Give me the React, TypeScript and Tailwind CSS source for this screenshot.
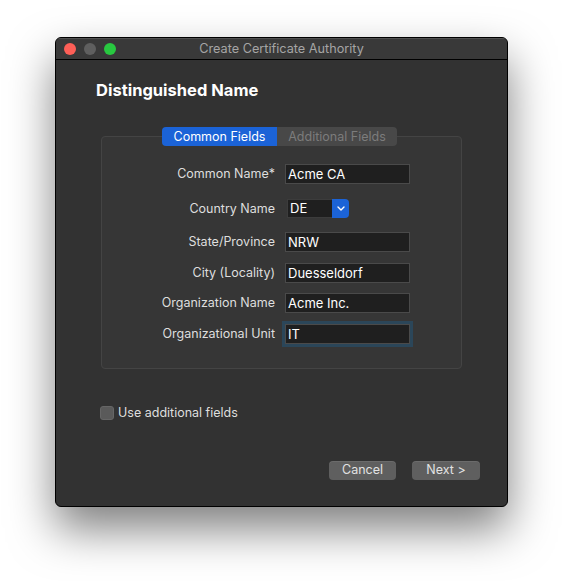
import React from "react";

const font = { fontFamily: "Inter, 'Liberation Sans', sans-serif" };

function Field({ label, value, focused, mt }: { label: string; value: string; focused?: boolean; mt: string }) {
  return (
    <div className={`flex items-center h-[20px] ${mt}`}>
      <div className="w-[174px] text-right text-[12.5px] text-[#dedede] pr-[1px] pt-[1px]">{label}</div>
      <div
        className={`ml-[9px] w-[125px] h-[20px] bg-[#1f1f1f] border border-[#4a4a4a] flex items-center pl-[2px] pt-[1px] text-[13px] text-white ${
          focused ? "shadow-[0_0_0_3px_#2b4659] border-[#3b6d8f]" : ""
        }`}
      >
        {value}
      </div>
    </div>
  );
}

export default function App() {
  return (
    <div className="w-[563px] h-[581px] bg-white pl-[55px] pt-[37px]" style={font}>
      <div className="w-[453px] h-[470px] rounded-[6px] border border-black bg-[#323232] shadow-[0_22px_45px_rgba(0,0,0,0.5)] flex flex-col overflow-hidden">
        {/* title bar */}
        <div className="relative h-[22px] shrink-0 bg-[#393939] border-b border-black flex items-center justify-center shadow-[inset_0_1px_0_rgba(255,255,255,0.12)]">
          <div className="absolute left-[8px] top-[5px] flex gap-[8px]">
            <span className="w-[12px] h-[12px] rounded-full bg-[#fe5f57]" />
            <span className="w-[12px] h-[12px] rounded-full bg-[#5f5f5f]" />
            <span className="w-[12px] h-[12px] rounded-full bg-[#28c840]" />
          </div>
          <span className="text-[12.7px] text-[#a5a5a5]">Create Certificate Authority</span>
        </div>

        <div className="ml-[40px] mt-[20px] text-[16.5px] leading-[20px] font-bold text-white">Distinguished Name</div>

        {/* tabs */}
        <div className="relative z-10 mt-[27px] ml-[106px] flex h-[19px] w-[235px] rounded-[4px] overflow-hidden text-[12.5px]">
          <div className="w-[115px] bg-[#1b63d7] text-white flex items-center justify-center pt-[1px]">Common Fields</div>
          <div className="flex-1 bg-[#484848] text-[#7c7c7c] flex items-center justify-center pt-[1px]">Additional Fields</div>
        </div>

        {/* box */}
        <div className="-mt-[10px] ml-[45px] w-[361px] h-[233px] rounded-[4px] border border-[#444444] bg-[#363636] pt-[27px]">
          <Field label="Common Name*" value="Acme CA" mt="" />
          <div className="flex items-center h-[19px] mt-[15px]">
            <div className="w-[174px] text-right text-[12.5px] text-[#dedede] pr-[1px] pt-[1px]">Country Name</div>
            <div className="ml-[11px] flex h-[19px]">
              <div className="w-[45px] bg-[#1f1f1f] border border-[#3c3c3c] border-r-0 flex items-center pl-[2px] pt-[1px] text-[13px] text-white">DE</div>
              <div className="w-[17px] bg-[#1b63d7] rounded-r-[4px] flex items-center justify-center">
                <svg width="8" height="5" viewBox="0 0 8 5" fill="none">
                  <path d="M1 1l3 3 3-3" stroke="white" strokeWidth="1.4" strokeLinecap="round" strokeLinejoin="round" />
                </svg>
              </div>
            </div>
          </div>
          <Field label="State/Province" value="NRW" mt="mt-[14px]" />
          <Field label="City (Locality)" value="Duesseldorf" mt="mt-[11px]" />
          <Field label="Organization Name" value="Acme Inc." mt="mt-[10px]" />
          <Field label="Organizational Unit" value="IT" focused mt="mt-[11px]" />
        </div>

        {/* checkbox */}
        <div className="mt-[34px] ml-[44px] flex items-center">
          <span className="w-[14px] h-[14px] rounded-[3px] bg-[#5a5a5a] border border-[#666666]" />
          <span className="ml-[4px] text-[12.5px] text-[#dedede] pt-[1px]">Use additional fields</span>
        </div>

        {/* buttons */}
        <div className="mt-[38px] mr-[27px] flex justify-end gap-[16px]">
          <button className="w-[67px] h-[19px] rounded-[4px] bg-[#5f5f5f] text-[12.5px] text-[#e2e2e2] shadow-[inset_0_1px_0_rgba(255,255,255,0.08)]">Cancel</button>
          <button className="w-[68px] h-[19px] rounded-[4px] bg-[#5f5f5f] text-[12.5px] text-[#e2e2e2] shadow-[inset_0_1px_0_rgba(255,255,255,0.08)]">Next &gt;</button>
        </div>
      </div>
    </div>
  );
}
